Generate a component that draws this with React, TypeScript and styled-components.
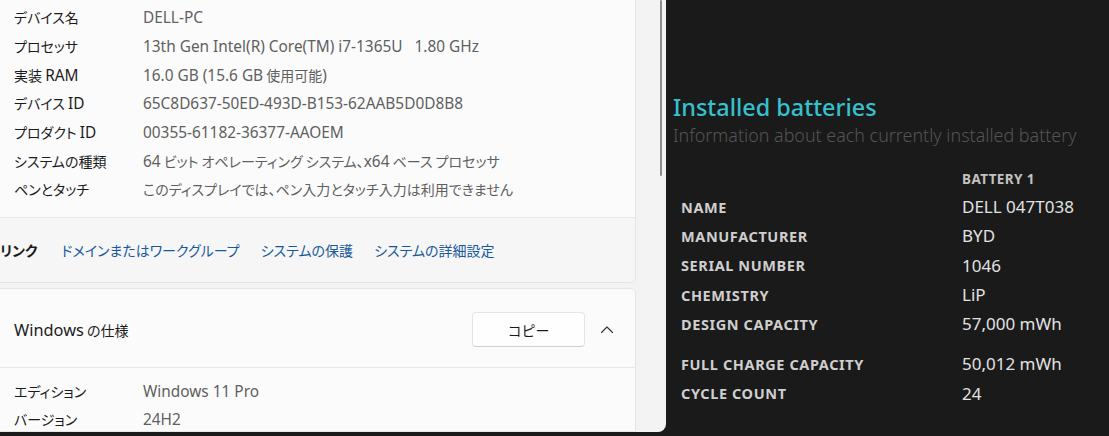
import styled, { createGlobalStyle } from "styled-components";

const GlobalStyle = createGlobalStyle`
  html, body {
    margin: 0;
    padding: 0;
    background: #1a1a1a;
  }
`;

const specs: [string, string][] = [
  ["デバイス名", "DELL-PC"],
  ["プロセッサ", "13th Gen Intel(R) Core(TM) i7-1365U   1.80 GHz"],
  ["実装 RAM", "16.0 GB (15.6 GB 使用可能)"],
  ["デバイス ID", "65C8D637-50ED-493D-B153-62AAB5D0D8B8"],
  ["プロダクト ID", "00355-61182-36377-AAOEM"],
  ["システムの種類", "64 ビット オペレーティング システム、x64 ベース プロセッサ"],
  ["ペンとタッチ", "このディスプレイでは、ペン入力とタッチ入力は利用できません"],
];

const windowsSpecs: [string, string][] = [
  ["エディション", "Windows 11 Pro"],
  ["バージョン", "24H2"],
];

const links = ["ドメインまたはワークグループ", "システムの保護", "システムの詳細設定"];

const battery: { label: string; value: string; gap?: boolean }[] = [
  { label: "NAME", value: "DELL 047T038" },
  { label: "MANUFACTURER", value: "BYD" },
  { label: "SERIAL NUMBER", value: "1046" },
  { label: "CHEMISTRY", value: "LiP" },
  { label: "DESIGN CAPACITY", value: "57,000 mWh" },
  { label: "FULL CHARGE CAPACITY", value: "50,012 mWh", gap: true },
  { label: "CYCLE COUNT", value: "24" },
];

// Yu Gothic UI draws its latin part larger than the kana, so latin runs get their own span
function Mixed({ text }: { text: string }): JSX.Element {
  const parts = text.split(/([\x21-\x7e][\x20-\x7e]*[\x21-\x7e]|[\x21-\x7e])/);
  return (
    <>
      {parts.map((p, i) =>
        i % 2 === 1 ? <Latin key={i}>{p}</Latin> : p
      )}
    </>
  );
}

function App(): JSX.Element {
  return (
    <Screen>
      <GlobalStyle />
      <SettingsWindow>
        <SettingsContent>
          <Card>
            <SpecList>
              {specs.map(([label, value]) => (
                <SpecRow key={label}>
                  <SpecLabel>
                    <Mixed text={label} />
                  </SpecLabel>
                  <SpecValue>
                    <Mixed text={value} />
                  </SpecValue>
                </SpecRow>
              ))}
            </SpecList>
            <LinkBar>
              <LinkTitle>リンク</LinkTitle>
              {links.map((l) => (
                <LinkItem key={l}>{l}</LinkItem>
              ))}
            </LinkBar>
          </Card>
          <Card $roundTop>
            <CardHeader>
              <HeaderTitle>
                <Mixed text="Windows の仕様" />
              </HeaderTitle>
              <CopyButton>コピー</CopyButton>
              <Chevron viewBox="0 0 16 16">
                <path
                  d="M2.5 10.5 L8 5 L13.5 10.5"
                  fill="none"
                  stroke="#333"
                  strokeWidth="1.1"
                  strokeLinecap="round"
                  strokeLinejoin="round"
                />
              </Chevron>
            </CardHeader>
            <WinSpecList>
              {windowsSpecs.map(([label, value]) => (
                <WinSpecRow key={label}>
                  <SpecLabel>{label}</SpecLabel>
                  <SpecValue>
                    <Mixed text={value} />
                  </SpecValue>
                </WinSpecRow>
              ))}
            </WinSpecList>
          </Card>
        </SettingsContent>
        <Gutter>
          <ScrollThumb />
        </Gutter>
      </SettingsWindow>
      <ReportPane>
        <ReportTitle>Installed batteries</ReportTitle>
        <ReportSubtitle>
          Information about each currently installed battery
        </ReportSubtitle>
        <BatteryTable>
          <BatteryLabel />
          <ColumnHead>BATTERY 1</ColumnHead>
          {battery.map((b) => (
            <BatteryRow key={b.label} $gap={b.gap}>
              <BatteryLabel>{b.label}</BatteryLabel>
              <BatteryValue>{b.value}</BatteryValue>
            </BatteryRow>
          ))}
        </BatteryTable>
      </ReportPane>
    </Screen>
  );
}

const Screen = styled.div`
  display: flex;
  width: 1109px;
  height: 436px;
  overflow: hidden;
  background: #1a1a1a;
`;

const SettingsWindow = styled.div`
  display: flex;
  width: 666px;
  height: 432px;
  flex-shrink: 0;
  background: #f3f3f3;
  border-bottom-right-radius: 8px;
  overflow: hidden;
  font-family: "Noto Sans CJK JP", sans-serif;
  font-feature-settings: "palt";
`;

const Latin = styled.span`
  font-family: "Noto Sans", "Noto Sans CJK JP", sans-serif;
  font-size: 1.1em;
  line-height: 1;
`;

const SettingsContent = styled.div`
  display: flex;
  flex-direction: column;
  gap: 5px;
  width: 636px;
`;

const Card = styled.div<{ $roundTop?: boolean }>`
  background: #fbfbfb;
  border-right: 1px solid #e5e5e5;
  border-bottom: 1px solid #e5e5e5;
  border-top: ${(p) => (p.$roundTop ? "1px solid #e5e5e5" : "none")};
  border-radius: ${(p) => (p.$roundTop ? "0 6px 0 0" : "0 0 6px 0")};
  overflow: hidden;
`;

const SpecList = styled.div`
  padding: 3px 0 13px 14px;
  border-bottom: 1px solid #e8e8e8;
`;

const SpecRow = styled.div`
  display: flex;
  align-items: center;
  height: 28.67px;
  font-size: 14px;
`;

const SpecLabel = styled.span`
  width: 129px;
  flex-shrink: 0;
  color: #1b1b1b;
`;

const SpecValue = styled.span`
  color: #5f5f5f;
  white-space: pre;
`;

const LinkBar = styled.div`
  display: flex;
  align-items: center;
  gap: 21px;
  height: 67px;
  padding-bottom: 3px;
  box-sizing: border-box;
  background: #f6f6f6;
  font-size: 14px;
`;

const LinkTitle = styled.span`
  font-weight: 700;
  color: #1b1b1b;
  margin-right: 3px;
`;

const LinkItem = styled.span`
  color: #17599b;
`;

const CardHeader = styled.div`
  display: flex;
  align-items: center;
  height: 79px;
  padding: 4px 20px 0 14px;
  box-sizing: border-box;
  border-bottom: 1px solid #e8e8e8;
  background: #fbfbfb;
`;

const HeaderTitle = styled.span`
  flex: 1;
  font-size: 14px;
  color: #1b1b1b;

  ${Latin} {
    font-size: 1.17em;
  }
`;

const CopyButton = styled.button`
  width: 113px;
  height: 35px;
  margin-right: 14px;
  background: #fefefe;
  border: 1px solid #e5e5e5;
  border-bottom-color: #d0d0d0;
  border-radius: 4px;
  font-family: inherit;
  font-size: 14px;
  color: #1b1b1b;
`;

const Chevron = styled.svg`
  width: 16px;
  height: 16px;
`;

const WinSpecList = styled.div`
  padding: 9px 0 0 14px;
`;

const WinSpecRow = styled(SpecRow)`
  height: 28px;
`;

const Gutter = styled.div`
  flex: 1;
  padding-left: 24px;
`;

const ScrollThumb = styled.div`
  width: 2px;
  height: 176px;
  background: #8c8c8c;
  border-radius: 1px;
`;

const ReportPane = styled.div`
  flex: 1;
  padding: 93px 0 0 7px;
  font-family: "Noto Sans", "Open Sans", sans-serif;
`;

const ReportTitle = styled.div`
  font-size: 23.4px;
  line-height: 29px;
  color: #37c0cd;
  font-weight: 500;
`;

const ReportSubtitle = styled.div`
  font-size: 17.9px;
  line-height: 26px;
  color: #545454;
  font-weight: 300;
`;

const BatteryTable = styled.div`
  display: grid;
  grid-template-columns: 281px auto;
  margin-top: 18px;
  padding-left: 8px;
  align-items: center;
`;

const BatteryRow = styled.div<{ $gap?: boolean }>`
  display: contents;
  & > * {
    height: 29.3px;
    display: flex;
    align-items: center;
    margin-top: ${(p) => (p.$gap ? "10.7px" : "0")};
  }
`;

const ColumnHead = styled.div`
  height: 26px;
  display: flex;
  align-items: center;
  font-size: 13.5px;
  font-weight: 700;
  color: #c2c2c2;
  letter-spacing: 0.4px;
`;

const BatteryLabel = styled.div`
  font-size: 14.5px;
  font-weight: 700;
  color: #cfcfcf;
  letter-spacing: 0.6px;
`;

const BatteryValue = styled.div`
  font-size: 17px;
  color: #e2e2e2;
`;

export default App;
